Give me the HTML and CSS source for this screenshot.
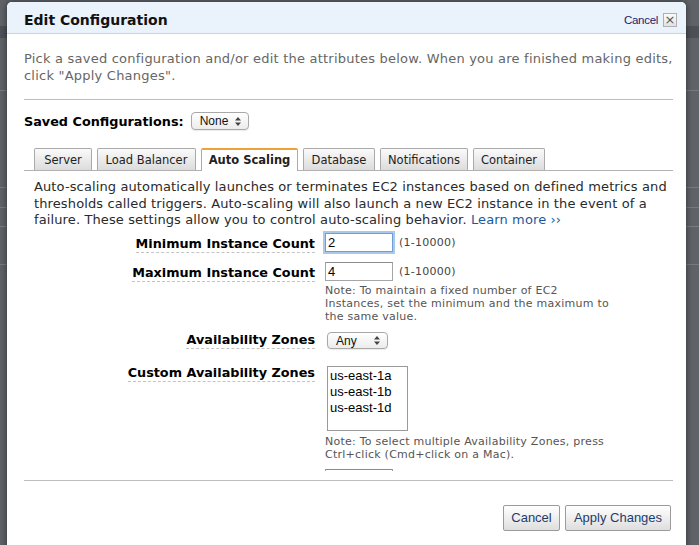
FILE: index.html
```html
<!DOCTYPE html>
<html>
<head>
<meta charset="utf-8">
<link rel="stylesheet" href="styles.css">
</head>
<body>
<div class="modal">
  <div class="modal-head">
    <h1 class="title">Edit Configuration</h1>
    <div class="head-actions">
      <span class="cancel-link">Cancel</span>
      <span class="close-box">×</span>
    </div>
  </div>
  <div class="modal-body">
    <p class="desc">Pick a saved configuration and/or edit the attributes below. When you are finished making edits, click "Apply Changes".</p>
    <div class="rule rule-top"></div>
    <div class="saved-row">
      <span class="saved-label">Saved Configurations:</span>
      <span class="select select-none">None<svg class="updown" width="6" height="9" viewBox="0 0 6 9"><path d="M3 0 L6 3.5 L0 3.5 Z M3 9 L6 5.5 L0 5.5 Z" fill="#444"/></svg></span>
    </div>
    <div class="tabs">
      <span class="tab tab-server">Server</span>
      <span class="tab tab-lb">Load Balancer</span>
      <span class="tab tab-active">Auto Scaling</span>
      <span class="tab tab-db">Database</span>
      <span class="tab tab-notif">Notifications</span>
      <span class="tab tab-cont">Container</span>
    </div>
    <div class="panel">
      <p class="intro">Auto-scaling automatically launches or terminates EC2 instances based on defined metrics and thresholds called triggers. Auto-scaling will also launch a new EC2 instance in the event of a failure. These settings allow you to control auto-scaling behavior. <span class="learn">Learn more ››</span></p>
      <div class="form">
        <div class="row row-min">
          <div class="label-cell"><span class="label">Minimum Instance Count</span></div>
          <div class="field-cell">
            <div class="field-line"><span class="input input-focus">2</span><span class="range">(1-10000)</span></div>
          </div>
        </div>
        <div class="row row-max">
          <div class="label-cell"><span class="label">Maximum Instance Count</span></div>
          <div class="field-cell">
            <div class="field-line"><span class="input">4</span><span class="range">(1-10000)</span></div>
            <p class="note note-max">Note: To maintain a fixed number of EC2 Instances, set the minimum and the maximum to the same value.</p>
          </div>
        </div>
        <div class="row row-az">
          <div class="label-cell"><span class="label">Availability Zones</span></div>
          <div class="field-cell">
            <span class="select select-any">Any<svg class="updown" width="6" height="9" viewBox="0 0 6 9"><path d="M3 0 L6 3.5 L0 3.5 Z M3 9 L6 5.5 L0 5.5 Z" fill="#444"/></svg></span>
          </div>
        </div>
        <div class="row row-custom">
          <div class="label-cell"><span class="label">Custom Availability Zones</span></div>
          <div class="field-cell">
            <div class="listbox">
              <div class="opt">us-east-1a</div>
              <div class="opt">us-east-1b</div>
              <div class="opt">us-east-1d</div>
            </div>
            <p class="note note-az">Note: To select multiple Availability Zones, press Ctrl+click (Cmd+click on a Mac).</p>
            <span class="input input-cut"></span>
          </div>
        </div>
      </div>
    </div>
    <div class="rule rule-bottom"></div>
    <div class="footer">
      <span class="btn btn-cancel">Cancel</span>
      <span class="btn btn-apply">Apply Changes</span>
    </div>
  </div>
</div>
</body>
</html>
```
FILE: styles.css
```css
html, body {
  margin: 0;
  padding: 0;
}
body {
  width: 699px;
  height: 545px;
  overflow: hidden;
  background-color: #5f6368;
  background-image:
    linear-gradient(#777b80, #777b80),
    linear-gradient(#777b80, #777b80),
    linear-gradient(#777b80, #777b80),
    linear-gradient(#777b80, #777b80),
    linear-gradient(#7a7e83, #7a7e83),
    linear-gradient(#4d5157, #4d5157);
  background-size: 100% 1px, 100% 1px, 100% 1px, 100% 1px, 100% 1px, 100% 12px;
  background-position: 0 90px, 0 187px, 0 207px, 0 264px, 0 226px, 0 26px;
  background-repeat: no-repeat;
  font-family: "DejaVu Sans", Verdana, sans-serif;
}
.modal {
  margin: 2px 0 0 7px;
  width: 679px;
  height: 560px;
  background: #fff;
  border-radius: 5px 5px 0 0;
  box-shadow: 0 0 6px rgba(0, 0, 0, 0.55);
  overflow: hidden;
}
.modal-head {
  box-sizing: border-box;
  height: 32px;
  background: #eaf2fc;
  border-bottom: 1px solid #bcd7f0;
  display: flex;
  align-items: center;
  justify-content: space-between;
  padding: 4px 9px 0 17px;
}
.title {
  margin: 0;
  font-size: 14px;
  font-weight: bold;
  color: #111;
}
.head-actions {
  display: flex;
  align-items: center;
  gap: 5px;
}
.cancel-link {
  font-family: "Liberation Sans", Arial, sans-serif;
  font-size: 11.5px;
  letter-spacing: -0.3px;
  color: #20226e;
}
.close-box {
  box-sizing: border-box;
  width: 14px;
  height: 14px;
  border: 1px solid #b0b0b0;
  background: linear-gradient(#fbfbfb, #e2e2e2);
  font-family: "DejaVu Sans", sans-serif;
  font-size: 13px;
  line-height: 11px;
  text-align: center;
  color: #555;
}
.modal-body {
  padding: 0 13px 0 17px;
}
.desc {
  margin: 0;
  padding-top: 16px;
  font-size: 13px;
  line-height: 17px;
  letter-spacing: 0.22px;
  color: #666;
}
.rule {
  height: 1px;
  background: #bdbdbd;
}
.rule-top {
  margin-top: 15px;
}
.saved-row {
  margin-top: 12px;
  display: flex;
  align-items: center;
  gap: 7px;
  height: 18px;
}
.saved-label {
  font-size: 12.8px;
  font-weight: bold;
  color: #000;
}
.select {
  display: inline-flex;
  align-items: center;
  justify-content: space-between;
  box-sizing: border-box;
  height: 18px;
  border: 1px solid #a8a8a8;
  border-radius: 4px;
  background: linear-gradient(#ffffff, #ececec);
  font-family: "Liberation Sans", Arial, sans-serif;
  font-size: 12px;
  color: #111;
  padding: 0 7px 0 8px;
  box-shadow: 0 1px 1px rgba(0, 0, 0, 0.08);
}
.select-none {
  width: 58px;
}
.select-any {
  width: 61px;
  height: 17px;
  margin-left: 2px;
  margin-top: 1px;
}
.tabs {
  margin-top: 18px;
  display: flex;
  gap: 5px;
  padding-left: 10px;
  border-bottom: 1px solid #b2b2b2;
  height: 22px;
}
.tab {
  box-sizing: border-box;
  height: 22px;
  border: 1px solid #aaa;
  border-bottom: none;
  border-radius: 2px 2px 0 0;
  background: linear-gradient(#fafafa, #dcdcdc);
  font-size: 11.5px;
  line-height: 22px;
  color: #222;
  text-align: center;
}
.tab-server { width: 58px; }
.tab-lb { width: 99px; }
.tab-active {
  width: 97px;
  height: 23px;
  background: #fff;
  border-top: 2px solid #f0a23a;
  font-weight: bold;
  line-height: 21px;
  color: #222;
}
.tab-db { width: 72px; }
.tab-notif { width: 88px; }
.tab-cont { width: 72px; }
.panel {
  height: 300px;
  overflow: hidden;
  padding-left: 10px;
}
.intro {
  margin: 8px 0 0 0;
  font-size: 13px;
  line-height: 16.5px;
  letter-spacing: 0.12px;
  color: #2a2a2a;
}
.learn {
  color: #1c5a9c;
}
.form {
  margin-top: 4px;
  display: flex;
  flex-direction: column;
}
.row {
  display: grid;
  grid-template-columns: 281px 1fr;
  column-gap: 10px;
  align-items: start;
}
.row-max { margin-top: 8px; }
.row-az { margin-top: 7px; }
.row-custom { margin-top: 14px; }
.label-cell {
  text-align: right;
  line-height: 20px;
}
.label {
  font-size: 12.8px;
  font-weight: bold;
  color: #000;
  border-bottom: 1px dashed #c4c4c4;
  padding-bottom: 1px;
}
.row-az .label-cell, .row-custom .label-cell {
  line-height: 18px;
}
.field-line {
  display: flex;
  align-items: center;
  gap: 6px;
  height: 20px;
}
.input {
  box-sizing: border-box;
  width: 68px;
  height: 19px;
  border: 1px solid #a5a5a5;
  border-top-color: #8c8c8c;
  background: #fff;
  font-family: "Liberation Sans", Arial, sans-serif;
  font-size: 13px;
  line-height: 17px;
  padding-left: 2px;
  color: #000;
}
.input-focus {
  border: 1px solid #6f9fd6;
  box-shadow: 0 0 0 2px #a8c8ec;
}
.range {
  font-size: 11px;
  letter-spacing: 0.25px;
  color: #444;
}
.note {
  margin: 0;
  font-size: 11px;
  line-height: 13px;
  letter-spacing: 0.25px;
  color: #555;
  width: 292px;
}
.note-max {
  margin-top: 2px;
}
.listbox {
  box-sizing: border-box;
  width: 81px;
  height: 65px;
  margin: 3px 0 0 2px;
  border: 1px solid #9a9a9a;
  padding: 1px 2px;
  font-family: "Liberation Sans", Arial, sans-serif;
  font-size: 13px;
  line-height: 16px;
  color: #000;
}
.note-az {
  margin-top: 4px;
}
.input-cut {
  display: block;
  margin-top: 8px;
}
.rule-bottom {
  margin-top: 9px;
}
.footer {
  margin-top: 24px;
  display: flex;
  justify-content: flex-end;
  gap: 5px;
  padding-right: 2px;
}
.btn {
  box-sizing: border-box;
  height: 26px;
  border: 1px solid #9b9b9b;
  border-radius: 2px;
  background: linear-gradient(#ffffff, #dedede);
  font-family: "Liberation Sans", Arial, sans-serif;
  font-size: 13px;
  line-height: 24px;
  color: #1e3c6e;
  text-align: center;
}
.btn-cancel { width: 57px; }
.btn-apply { width: 106px; }
```
